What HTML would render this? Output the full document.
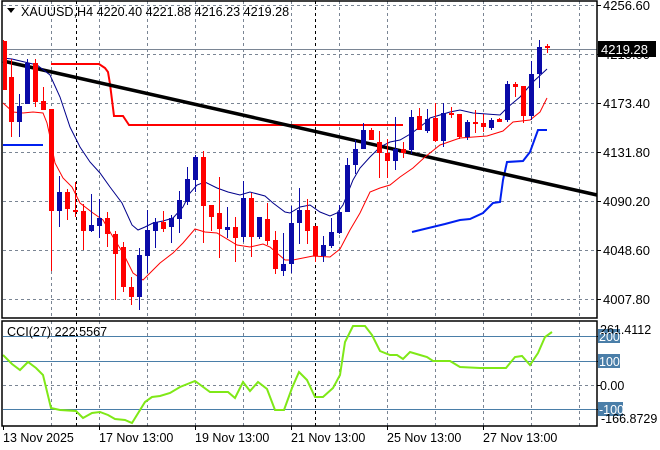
<!DOCTYPE html><html><head><meta charset="utf-8"><style>
body{margin:0;background:#fff;width:660px;height:450px;overflow:hidden}
svg{display:block}
text{font-family:"Liberation Sans",sans-serif;font-size:12.5px;fill:#000}
text.ax{font-size:13px}
text.hd{font-size:12.6px}
</style></head><body>
<svg width="660" height="450" viewBox="0 0 660 450" xmlns="http://www.w3.org/2000/svg">
<rect width="660" height="450" fill="#fff"/>
<g stroke="#7a8594" stroke-width="1" stroke-dasharray="3,3" fill="none">
<path d="M51.5 1V318M99.5 1V318M147.5 1V318M195.5 1V318M243.5 1V318M291.5 1V318M339.5 1V318M387.5 1V318M435.5 1V318M483.5 1V318M531.5 1V318M579.5 1V318"/>
<path d="M51.5 321V426M99.5 321V426M147.5 321V426M195.5 321V426M243.5 321V426M291.5 321V426M339.5 321V426M387.5 321V426M435.5 321V426M483.5 321V426M531.5 321V426M579.5 321V426"/>
<path d="M3 5.5H597M3 54.5H597M3 103.5H597M3 152.5H597M3 201.5H597M3 250.5H597M3 299.5H597M3 385.5H597"/>
</g>
<g stroke="#000" stroke-dasharray="3,3"><path d="M76.5 1V318M315.5 1V318M76.5 321V426M315.5 321V426"/></g>
<path d="M3 49.5H597" stroke="#7a8594"/>
<g stroke="#4a7ea8"><path d="M3 336.5H597M3 361.5H597M3 409.5H597"/></g>
<polyline points="51,64 99,64 105,68 108,72 110,84 112,100 114,116 123,116 129,125 403,125" fill="none" stroke="#f00" stroke-width="2"/>
<path d="M3 145H43" stroke="#0020f0" stroke-width="2"/>
<polyline points="412,232 445,224 460,220 470,219 483,213 493,203 500,202 503,180 507,162 523,161 530,152 538,130 547,130" fill="none" stroke="#0020f0" stroke-width="2"/>
<path d="M3 61L597 195" stroke="#000" stroke-width="3.5"/>
<polyline points="3,58 12,59 37,65 50,75 60,97 70,127 80,147 90,162 100,173 110,187 122,203 132,225 138,230 145,227 153,223 163,221 173,218 183,207 190,193 197,185 205,182 217,188 228,192 240,195 250,192 265,196 273,203 285,212 290,213 300,207 310,205 320,212 330,216 337,213 343,205 353,180 360,168 370,157 380,147 390,142 400,140 412,133 425,123 430,118 450,112 460,110 473,113 500,115 508,107 520,97 533,82 547,69" fill="none" stroke="#00008b" stroke-width="1"/>
<polyline points="3,103 13,112 23,113 33,112 43,113 47,123 50,137 55,163 63,178 72,187 80,203 93,213 103,220 113,237 123,253 133,273 143,280 150,273 160,263 173,253 183,243 195,229 205,232 217,233 237,245 250,247 263,244 270,247 285,260 293,260 313,256 330,257 340,249 350,230 360,213 370,192 380,188 390,185 400,177 413,168 425,157 440,145 460,138 487,136 503,131 513,122 530,120 540,112 547,98" fill="none" stroke="#f00" stroke-width="1"/>
<g fill="#f00" stroke="#f00">
<path fill="none" d="M3.5 40V90M11.5 59V137M35.5 59V107M43.5 87V110M51.5 109V271M67.5 189V220M75.5 182V217M83.5 204V250M107.5 212V247M115.5 231V300M123.5 242V292M131.5 277V305M163.5 211V232M203.5 151V243M211.5 205V231M219.5 177V258M235.5 217V262M251.5 193V257M267.5 203V245M275.5 231V274M307.5 199V244M315.5 226V262M371.5 128V140M379.5 131V178M387.5 139V178M403.5 142V158M419.5 108V130M435.5 103V142M451.5 107V118M459.5 114V139M475.5 110V133M483.5 114V132M499.5 118V122M515.5 82V97M523.5 86V123M547.5 44V53"/>
<g stroke="none">
<rect x="3" y="41" width="4" height="49"/><rect x="9" y="77" width="5" height="45"/><rect x="33" y="63" width="5" height="39"/><rect x="41" y="101" width="5" height="9"/><rect x="49" y="109" width="5" height="102"/><rect x="65" y="192" width="5" height="17"/><rect x="73" y="210" width="5" height="2"/><rect x="81" y="211" width="5" height="20"/><rect x="105" y="218" width="5" height="16"/><rect x="113" y="234" width="5" height="20"/><rect x="121" y="247" width="5" height="40"/><rect x="129" y="287" width="5" height="10"/><rect x="161" y="222" width="5" height="7"/><rect x="201" y="157" width="5" height="49"/><rect x="209" y="205" width="5" height="12"/><rect x="217" y="213" width="5" height="16"/><rect x="233" y="227" width="5" height="11"/><rect x="249" y="198" width="5" height="39"/><rect x="265" y="219" width="5" height="22"/><rect x="273" y="240" width="5" height="29"/><rect x="305" y="210" width="5" height="21"/><rect x="313" y="226" width="5" height="30"/><rect x="369" y="130" width="5" height="10"/><rect x="377" y="142" width="5" height="11"/><rect x="385" y="153" width="5" height="8"/><rect x="401" y="149" width="5" height="4"/><rect x="417" y="116" width="5" height="14"/><rect x="433" y="118" width="5" height="23"/><rect x="449" y="113" width="5" height="2"/><rect x="457" y="114" width="5" height="23"/><rect x="473" y="122" width="5" height="2"/><rect x="481" y="123" width="5" height="4"/><rect x="497" y="119" width="5" height="3"/><rect x="513" y="84" width="5" height="3"/><rect x="521" y="86" width="5" height="30"/><rect x="545" y="46" width="5" height="2"/>
</g></g>
<g fill="#0a0aa8" stroke="#0a0aa8">
<path fill="none" d="M19.5 94V137M27.5 59V104M59.5 176V227M91.5 194V232M99.5 199V238M139.5 248V310M147.5 210V273M155.5 218V248M171.5 215V243M179.5 191V233M187.5 167V205M195.5 155V192M227.5 207V238M243.5 181V242M259.5 217V239M283.5 233V276M291.5 206V273M299.5 188V244M323.5 236V262M331.5 218V248M339.5 205V234M347.5 158V212M355.5 140V174M363.5 123V149M395.5 117V170M411.5 110V154M427.5 109V133M443.5 103V147M467.5 120V140M491.5 118V130M507.5 81V122M531.5 61V120M539.5 40V88"/>
<g stroke="none">
<rect x="17" y="106" width="5" height="16"/><rect x="25" y="63" width="5" height="41"/><rect x="57" y="192" width="5" height="19"/><rect x="89" y="225" width="5" height="6"/><rect x="97" y="218" width="5" height="8"/><rect x="137" y="255" width="5" height="42"/><rect x="145" y="230" width="5" height="26"/><rect x="153" y="222" width="5" height="9"/><rect x="169" y="218" width="5" height="9"/><rect x="177" y="200" width="5" height="19"/><rect x="185" y="179" width="5" height="23"/><rect x="193" y="157" width="5" height="23"/><rect x="225" y="227" width="5" height="3"/><rect x="241" y="198" width="5" height="39"/><rect x="257" y="217" width="5" height="20"/><rect x="281" y="264" width="5" height="7"/><rect x="289" y="223" width="5" height="41"/><rect x="297" y="210" width="5" height="13"/><rect x="321" y="245" width="5" height="11"/><rect x="329" y="232" width="5" height="14"/><rect x="337" y="212" width="5" height="21"/><rect x="345" y="165" width="5" height="47"/><rect x="353" y="149" width="5" height="16"/><rect x="361" y="130" width="5" height="19"/><rect x="393" y="149" width="5" height="12"/><rect x="409" y="117" width="5" height="33"/><rect x="425" y="119" width="5" height="12"/><rect x="441" y="113" width="5" height="28"/><rect x="465" y="122" width="5" height="15"/><rect x="489" y="120" width="5" height="8"/><rect x="505" y="84" width="5" height="36"/><rect x="529" y="74" width="5" height="42"/><rect x="537" y="47" width="5" height="27"/>
</g></g>
<polyline points="3,355 12,364 20,370 28,362 36,368 43,375 51,408 60,410 76,411 83,418 92,413 100,412 108,415 115,419 125,420 132,423 145,402 152,397 160,396 170,393 180,387 195,381 210,392 228,392 235,398 243,382 250,391 258,382 267,389 275,410 284,410 292,388 299,372 307,380 315,397 323,397 333,388 340,375 345,342 353,326 365,326 372,335 380,351 390,355 397,355 403,359 410,352 420,355 427,357 433,361 450,361 460,367 480,368 500,368 506,368 515,357 522,356 530,365 538,353 545,337 552,332" fill="none" stroke="#7fe817" stroke-width="2"/>
<g fill="none" stroke="#000" stroke-width="1.5">
<path d="M2 1H597V318H2Z"/><path d="M2 321H597V426H2Z"/>
</g>
<g stroke="#000"><path d="M597 5.5h4M597 54.5h4M597 103.5h4M597 152.5h4M597 201.5h4M597 250.5h4M597 299.5h4M597 336.5h4M597 361.5h4M597 385.5h4M597 409.5h4M3.5 426v4M99.5 426v4M195.5 426v4M291.5 426v4M387.5 426v4M483.5 426v4"/></g>
<path d="M7 8h8l-4 5z" fill="#000"/>
<text class="hd" x="21" y="16">XAUUSD,H4  4220.40 4221.88 4216.23 4219.28</text>
<text class="hd" x="7" y="336">CCI(27) 222.5567</text>
<text class="ax" x="603" y="10">4256.60</text>
<text class="ax" x="603" y="59">4215.00</text>
<rect x="598" y="41" width="58" height="16" fill="#000"/>
<text class="ax" x="601" y="54" style="fill:#fff">4219.28</text>
<text class="ax" x="603" y="108">4173.40</text>
<text class="ax" x="603" y="157">4131.80</text>
<text class="ax" x="603" y="206">4090.20</text>
<text class="ax" x="603" y="255">4048.60</text>
<text class="ax" x="603" y="304">4007.80</text>
<rect x="598" y="329" width="22" height="14" fill="#4a7ea8"/>
<rect x="598" y="354" width="22" height="14" fill="#4a7ea8"/>
<rect x="598" y="402" width="25" height="14" fill="#4a7ea8"/>
<text x="600" y="334">261.4112</text>
<text x="599" y="341" style="fill:#fff">200</text>
<text x="599" y="366" style="fill:#fff">100</text>
<text x="600" y="390">0.00</text>
<text x="599" y="414" style="fill:#fff">-100</text>
<text x="601" y="423">-166.8729</text>
<text x="3" y="442">13 Nov 2025</text>
<text x="99" y="442">17 Nov 13:00</text>
<text x="195" y="442">19 Nov 13:00</text>
<text x="291" y="442">21 Nov 13:00</text>
<text x="387" y="442">25 Nov 13:00</text>
<text x="483" y="442">27 Nov 13:00</text>
</svg>
</body></html>
